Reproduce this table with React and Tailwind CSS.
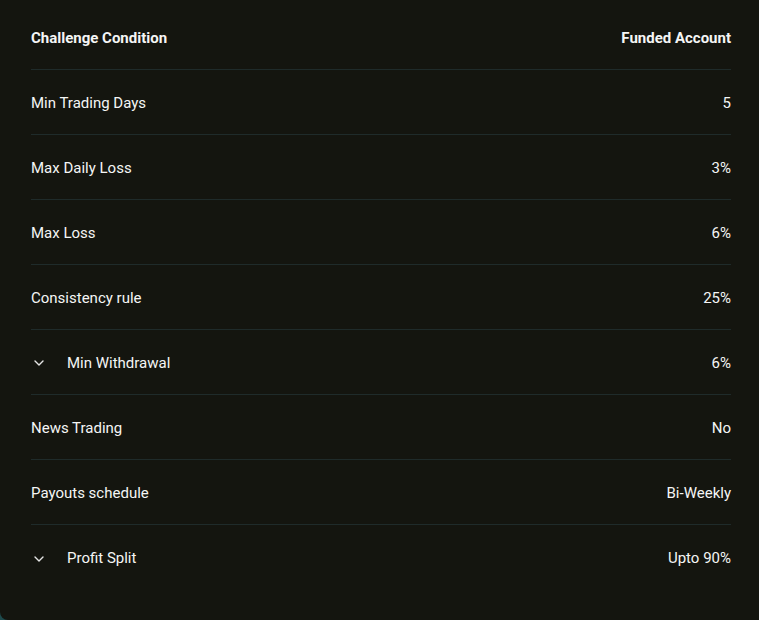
import React from 'react';

const rows = [
  { label: 'Min Trading Days', value: '5' },
  { label: 'Max Daily Loss', value: '3%' },
  { label: 'Max Loss', value: '6%' },
  { label: 'Consistency rule', value: '25%' },
  { label: 'Min Withdrawal', value: '6%', expandable: true },
  { label: 'News Trading', value: 'No' },
  { label: 'Payouts schedule', value: 'Bi-Weekly' },
  { label: 'Profit Split', value: 'Upto 90%', expandable: true },
];

function Chevron() {
  return (
    <svg className="w-[12px] h-[12px] text-[#e5e5e5]" viewBox="0 0 12 12" fill="none" stroke="currentColor" strokeWidth={1.4} strokeLinecap="round" strokeLinejoin="round">
      <path d="M2 4l4 4 4-4" />
    </svg>
  );
}

export default function App() {
  return (
    <div className="min-h-screen bg-[#1e4a4c]">
      <div
        className="h-[620px] w-[759px] bg-[#14150f] rounded-bl-[8px] pt-[5px] text-[#f5f5f5]"
        style={{ fontFamily: 'Roboto, "Open Sans", sans-serif' }}
      >
        <div className="ml-[31px] w-[700px]">
          {/* Header */}
          <div className="flex h-[65px] items-center justify-between border-b border-[#1f2b2a] pt-[2px] text-[15px] font-bold">
            <span>Challenge Condition</span>
            <span>Funded Account</span>
          </div>

          {rows.map((row, i) => (
            <div
              key={row.label}
              className={`flex h-[65px] items-center justify-between pt-[2px] text-[15px] ${i < rows.length - 1 ? 'border-b border-[#1f2b2a]' : ''}`}
            >
              <div className="flex items-center">
                {row.expandable && (
                  <span className="ml-[2px] mr-[22px] flex items-center">
                    <Chevron />
                  </span>
                )}
                <span>{row.label}</span>
              </div>
              <span>{row.value}</span>
            </div>
          ))}
        </div>
      </div>
    </div>
  );
}
